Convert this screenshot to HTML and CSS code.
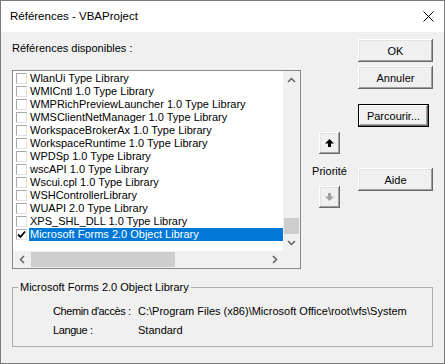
FILE: index.html
```html
<!DOCTYPE html>
<html lang="fr">
<head>
    <meta charset="UTF-8">
    <title>Références - VBAProject</title>
    <link rel="stylesheet" href="styles.css">
</head>
<body>

    <div class="window">
        <div class="titlebar">
            <span class="title">Références - VBAProject</span>
            <svg class="close" width="11" height="11" viewBox="0 0 11 11">
                <path d="M0.5 0.5 L10.5 10.5 M10.5 0.5 L0.5 10.5" stroke="#000" stroke-width="1" fill="none"/>
            </svg>
        </div>

        <div class="dialog">
            <div class="top">
                <div class="refs">
                    <div class="label">Références disponibles :</div>
                    <div class="listbox">
                        <ul class="items">
                            <li><span class="check"></span><span class="name">WlanUi Type Library</span></li>
                            <li><span class="check"></span><span class="name">WMICntl 1.0 Type Library</span></li>
                            <li><span class="check"></span><span class="name">WMPRichPreviewLauncher 1.0 Type Library</span></li>
                            <li><span class="check"></span><span class="name">WMSClientNetManager 1.0 Type Library</span></li>
                            <li><span class="check"></span><span class="name">WorkspaceBrokerAx 1.0 Type Library</span></li>
                            <li><span class="check"></span><span class="name">WorkspaceRuntime 1.0 Type Library</span></li>
                            <li><span class="check"></span><span class="name">WPDSp 1.0 Type Library</span></li>
                            <li><span class="check"></span><span class="name">wscAPI 1.0 Type Library</span></li>
                            <li><span class="check"></span><span class="name">Wscui.cpl 1.0 Type Library</span></li>
                            <li><span class="check"></span><span class="name">WSHControllerLibrary</span></li>
                            <li><span class="check"></span><span class="name">WUAPI 2.0 Type Library</span></li>
                            <li><span class="check"></span><span class="name">XPS_SHL_DLL 1.0 Type Library</span></li>
                            <li class="selected">
                                <span class="check">
                                    <svg width="9" height="9" viewBox="0 0 9 9">
                                        <path d="M1 4.5 L3.5 7 L8 1.5" stroke="#000" stroke-width="1.8" fill="none"/>
                                    </svg>
                                </span>
                                <span class="name">Microsoft Forms 2.0 Object Library</span>
                            </li>
                        </ul>

                        <!-- vertical scrollbar -->
                        <div class="vscroll">
                            <div class="arrow">
                                <svg width="9" height="6" viewBox="0 0 9 6"><path d="M1 5 L4.5 1.5 L8 5" stroke="#606060" stroke-width="1.5" fill="none"/></svg>
                            </div>
                            <div class="vtrack"><div class="vthumb"></div></div>
                            <div class="arrow">
                                <svg width="9" height="6" viewBox="0 0 9 6"><path d="M1 1 L4.5 4.5 L8 1" stroke="#606060" stroke-width="1.5" fill="none"/></svg>
                            </div>
                        </div>

                        <!-- horizontal scrollbar -->
                        <div class="hscroll">
                            <div class="arrow">
                                <svg width="6" height="9" viewBox="0 0 6 9"><path d="M5 1 L1.5 4.5 L5 8" stroke="#606060" stroke-width="1.5" fill="none"/></svg>
                            </div>
                            <div class="htrack"><div class="hthumb"></div></div>
                            <div class="arrow">
                                <svg width="6" height="9" viewBox="0 0 6 9"><path d="M1 1 L4.5 4.5 L1 8" stroke="#606060" stroke-width="1.5" fill="none"/></svg>
                            </div>
                        </div>
                        <div class="corner"></div>
                    </div>
                </div>

                <div class="priority">
                    <button class="button small">
                        <svg width="9" height="8" viewBox="0 0 9 8"><polygon points="4.5,0 9,4.5 6,4.5 6,8 3,8 3,4.5 0,4.5" fill="#000"/></svg>
                    </button>
                    <span class="priority-label">Priorité</span>
                    <button class="button small" disabled>
                        <svg width="9" height="8" viewBox="0 0 9 8"><polygon points="3,0 6,0 6,3.5 9,3.5 4.5,8 0,3.5 3,3.5" fill="#a0a0a0"/></svg>
                    </button>
                </div>

                <div class="actions">
                    <button class="button" id="okBtn">OK</button>
                    <button class="button" id="cancelBtn">Annuler</button>
                    <button class="button default" id="browseBtn">Parcourir...</button>
                    <button class="button" id="helpBtn">Aide</button>
                </div>
            </div>

            <fieldset class="info">
                <legend>Microsoft Forms 2.0 Object Library</legend>
                <div class="details">
                    <span class="key">Chemin d'accès :</span>
                    <span>C:\Program Files (x86)\Microsoft Office\root\vfs\System</span>
                    <span class="key">Langue :</span>
                    <span>Standard</span>
                </div>
            </fieldset>
        </div>
    </div>

</body>
</html>
```

FILE: styles.css
```css
* {
    box-sizing: border-box;
}
body {
    margin: 0;
    font-family: "Liberation Sans", Arial, sans-serif;
    font-size: 11px;
    color: #000;
    background: #f0f0f0;
}
.window {
    width: 445px;
    height: 364px;
    border: 1px solid #7a7a7a;
    background-color: #f0f0f0;
    overflow: hidden;
}
.titlebar {
    height: 31px;
    background-color: #fff;
    display: flex;
    align-items: center;
    justify-content: space-between;
    padding: 0 10px 0 9px;
}
.title {
    font-size: 11.5px;
    padding-bottom: 1px;
}
.close {
    display: block;
    margin-bottom: 1px;
}
.dialog {
    padding: 6px 11px 0 11px;
}
.top {
    display: flex;
}
.refs {
    width: 289px;
}
.label {
    line-height: 16px;
    margin-top: 2px;
    margin-bottom: 14px;
}

/* list box */
.listbox {
    height: 199px;
    border: 1px solid #828790;
    background-color: #fff;
    display: grid;
    grid-template-columns: 1fr 17px;
    grid-template-rows: 1fr 17px;
}
.items {
    list-style: none;
    margin: 0;
    padding: 1px 0 0 0;
    overflow: hidden;
}
.items li {
    display: flex;
    align-items: center;
    height: 13px;
    padding-left: 3px;
    white-space: nowrap;
}
.check {
    width: 11px;
    height: 11px;
    flex: none;
    background-color: #fff;
    border: 1px solid #a8a8a8;
    border-right-color: #e2e2e2;
    border-bottom-color: #e2e2e2;
    display: flex;
    align-items: center;
    justify-content: center;
}
.check svg {
    display: block;
}
.name {
    flex: 1;
    margin-left: 2px;
    padding-left: 1px;
    line-height: 13px;
}
.selected .name {
    background-color: #0078d7;
    color: #fff;
}

/* scrollbars */
.vscroll {
    display: flex;
    flex-direction: column;
    background-color: #f0f0f0;
}
.hscroll {
    display: flex;
    background-color: #f0f0f0;
}
.arrow {
    width: 17px;
    height: 17px;
    flex: none;
    display: flex;
    align-items: center;
    justify-content: center;
}
.vtrack {
    flex: 1;
    display: flex;
    flex-direction: column;
    justify-content: flex-end;
    align-items: center;
}
.vthumb {
    width: 15px;
    height: 16px;
    background-color: #cdcdcd;
}
.htrack {
    flex: 1;
    display: flex;
    align-items: center;
    padding-left: 1px;
}
.hthumb {
    width: 144px;
    height: 15px;
    background-color: #cdcdcd;
}
.corner {
    background-color: #f0f0f0;
}

/* buttons */
.button {
    font-family: inherit;
    font-size: 11px;
    color: #000;
    width: 75px;
    height: 23px;
    padding: 0;
    border: none;
    background-color: #f0f0f0;
    box-shadow: inset -1px -1px #696969, inset 1px 1px #fff, inset -2px -2px #a0a0a0, inset 2px 2px #e3e3e3;
    display: flex;
    align-items: center;
    justify-content: center;
}
.button.default {
    width: 71px;
    box-shadow: inset 0 0 0 1px #000, inset -2px -2px #696969, inset 2px 2px #fff, inset -3px -3px #a0a0a0;
}
.button.small {
    width: 21px;
    height: 22px;
}
.button svg {
    display: block;
}
.priority {
    width: 57px;
    display: flex;
    flex-direction: column;
    align-items: center;
}
.priority .button:first-child {
    margin-top: 94px;
}
.priority-label {
    line-height: 16px;
    margin: 9px 0 7px 0;
}
.actions {
    width: 75px;
    display: flex;
    flex-direction: column;
}
#okBtn {
    margin-top: 1px;
}
#cancelBtn {
    margin-top: 4px;
}
#browseBtn {
    margin-top: 15px;
}
#helpBtn {
    margin-top: 41px;
}

/* group box */
.info {
    margin: 10px 0 0 0;
    padding: 0 0 8px 5px;
    border: 1px solid #adadad;
    min-width: 0;
}
.info legend {
    padding: 0 2px;
    line-height: 16px;
}
.details {
    display: grid;
    grid-template-columns: 85px auto;
    row-gap: 3px;
    line-height: 16px;
    padding-left: 35px;
    margin-top: 8px;
}
.key {
    letter-spacing: -0.4px;
    white-space: nowrap;
}
```
